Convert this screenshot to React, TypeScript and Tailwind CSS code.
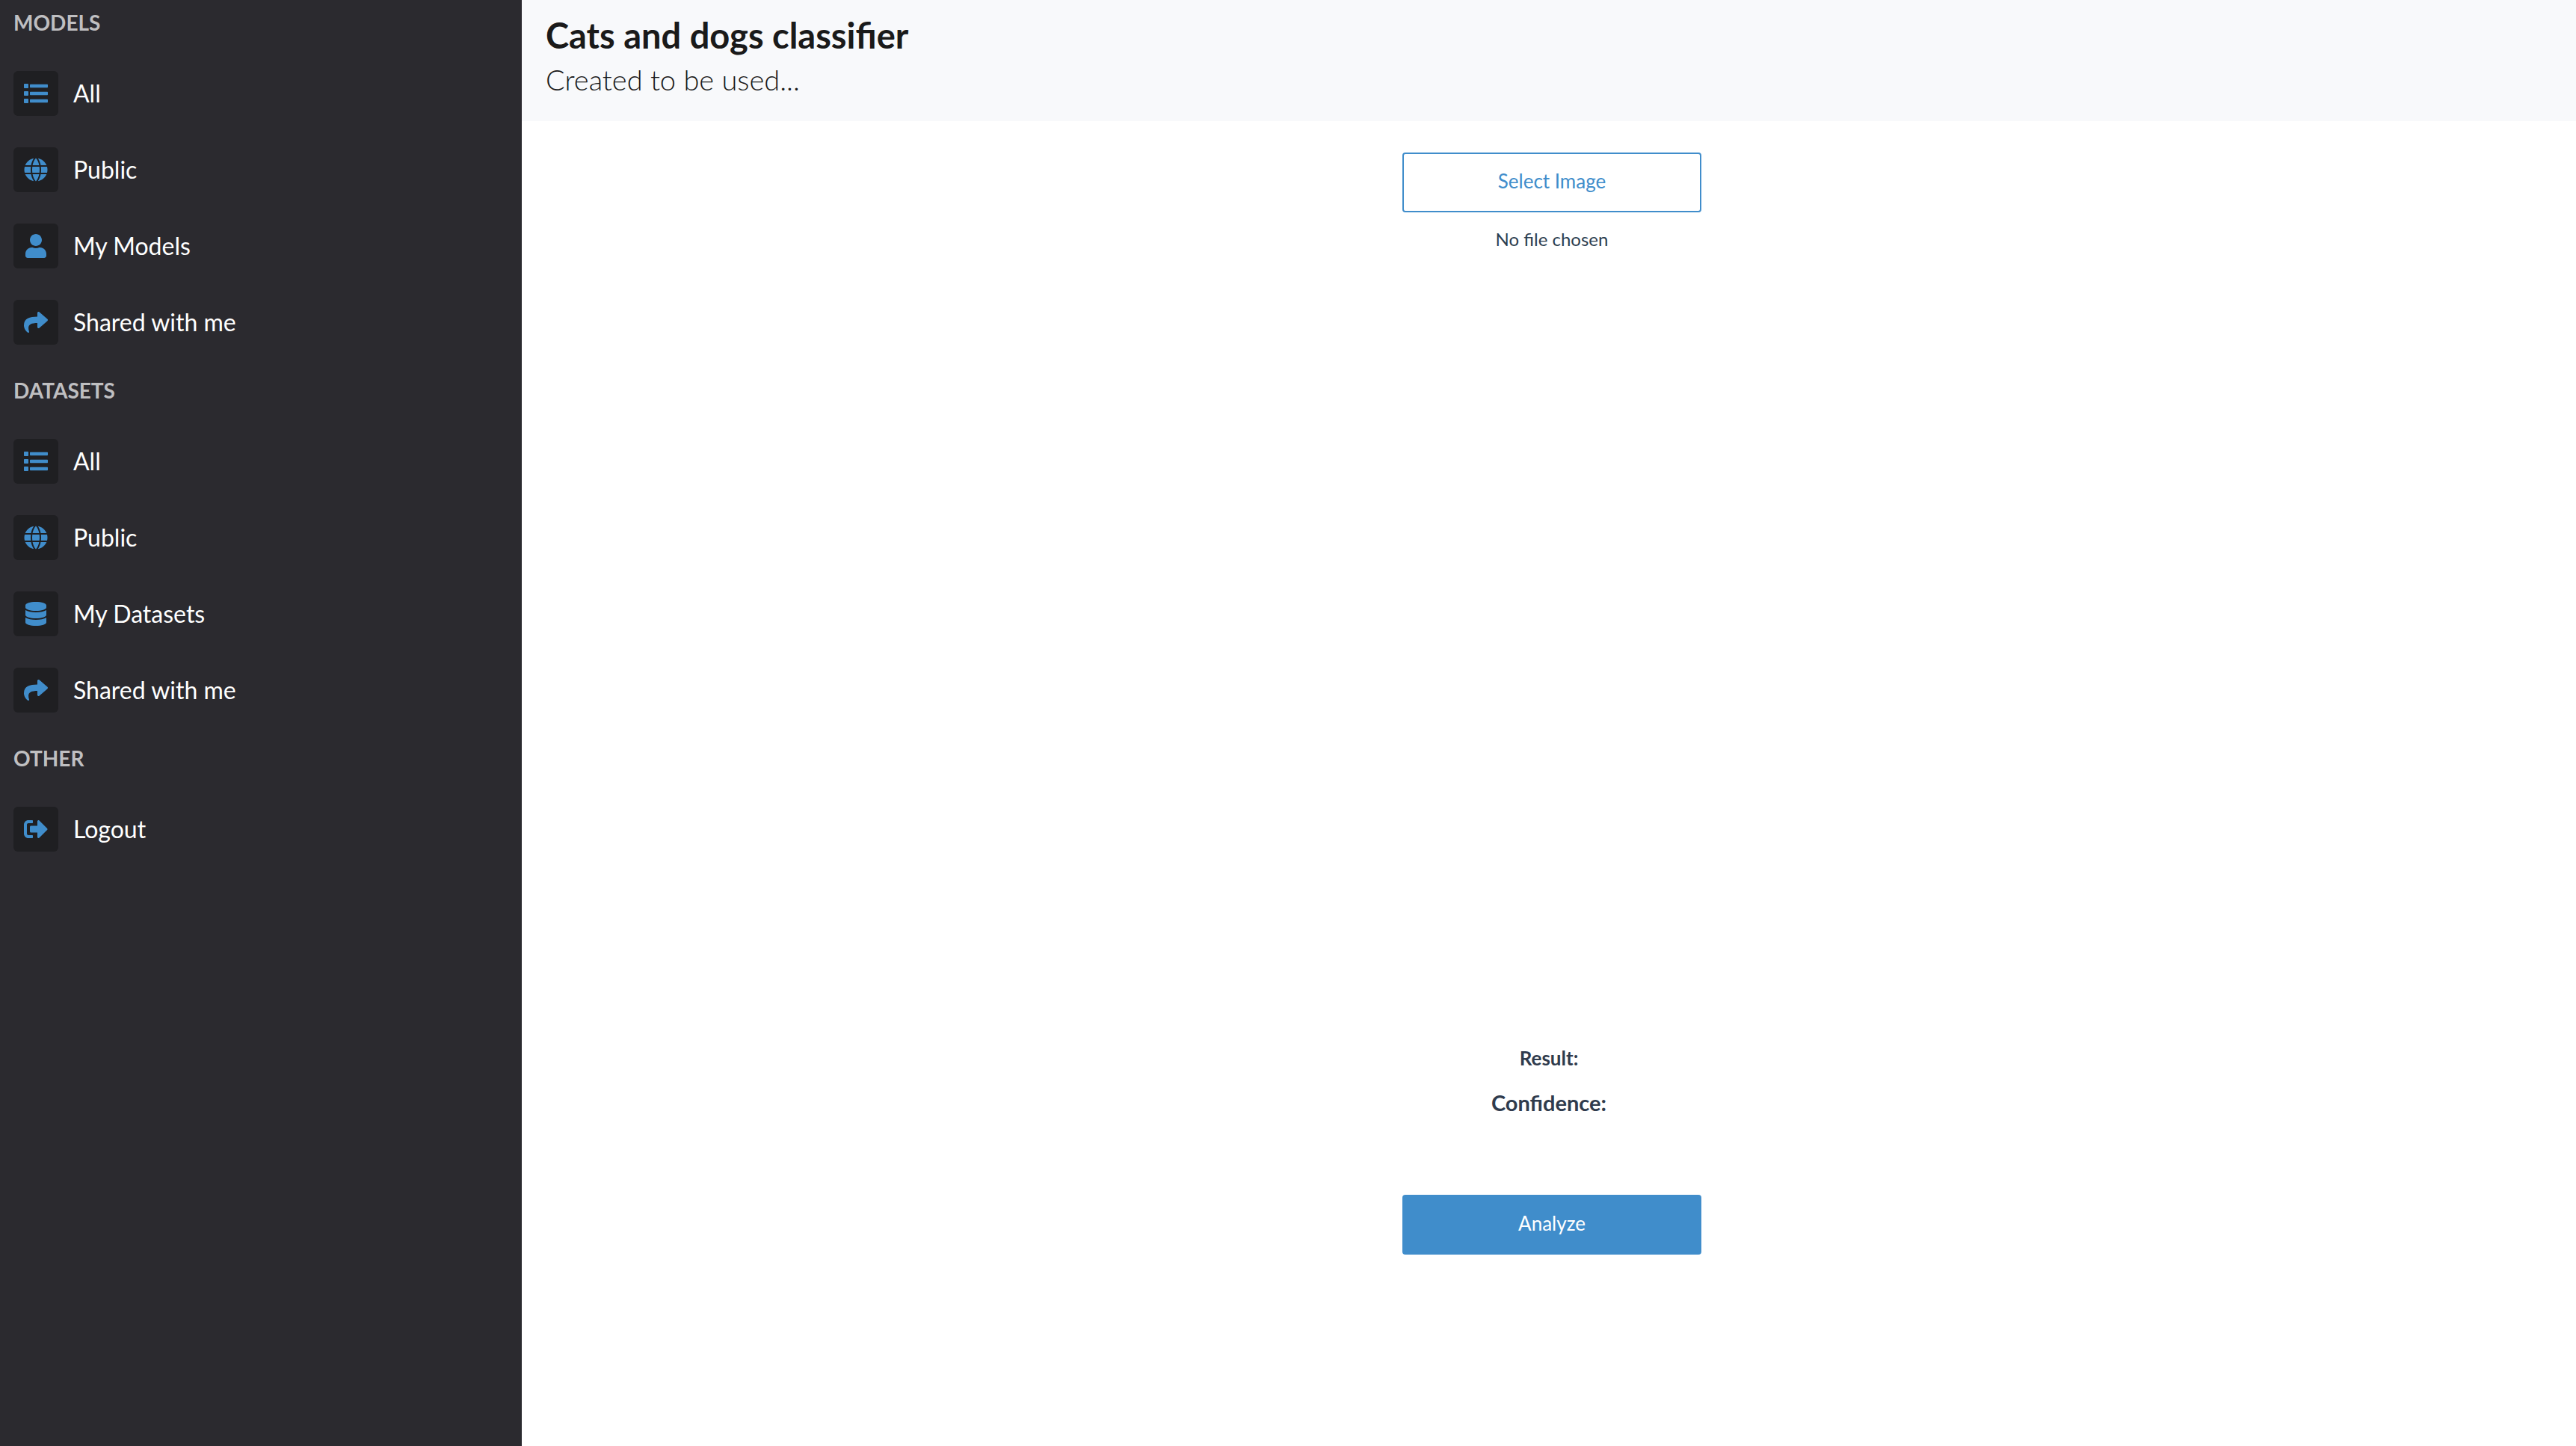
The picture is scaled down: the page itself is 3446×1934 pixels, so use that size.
import { useRef, useState, type ReactNode } from "react";
import { FaDatabase, FaShare, FaSignOutAlt, FaUser } from "react-icons/fa";

function ListIcon() {
  return (
    <svg viewBox="0 0 512 512" fill="currentColor" className="size-8" aria-hidden="true">
      <path d="M128 116V76c0-8.837 7.163-16 16-16h352c8.837 0 16 7.163 16 16v40c0 8.837-7.163 16-16 16H144c-8.837 0-16-7.163-16-16zm16 176h352c8.837 0 16-7.163 16-16v-40c0-8.837-7.163-16-16-16H144c-8.837 0-16 7.163-16 16v40c0 8.837 7.163 16 16 16zm0 160h352c8.837 0 16-7.163 16-16v-40c0-8.837-7.163-16-16-16H144c-8.837 0-16 7.163-16 16v40c0 8.837 7.163 16 16 16zM16 144h64c8.837 0 16-7.163 16-16V64c0-8.837-7.163-16-16-16H16C7.163 48 0 55.163 0 64v64c0 8.837 7.163 16 16 16zm0 160h64c8.837 0 16-7.163 16-16v-64c0-8.837-7.163-16-16-16H16c-8.837 0-16 7.163-16 16v64c0 8.837 7.163 16 16 16zm0 160h64c8.837 0 16-7.163 16-16v-64c0-8.837-7.163-16-16-16H16c-8.837 0-16 7.163-16 16v64c0 8.837 7.163 16 16 16z" />
    </svg>
  );
}

function GlobeIcon() {
  return (
    <svg viewBox="0 0 512 512" fill="currentColor" className="size-8" aria-hidden="true">
      <path d="M364.215 192h131.43c5.439 20.419 8.354 41.868 8.354 64s-2.915 43.581-8.354 64h-131.43c5.154-43.049 4.939-86.746 0-128zM185.214 352c10.678 53.68 33.173 112.514 70.125 151.992.221.001.44.008.661.008s.44-.008.661-.008c37.012-39.543 59.467-98.414 70.125-151.992H185.214zm174.13-192h125.385C452.802 84.024 384.128 27.305 300.95 12.075c30.238 43.12 48.821 96.332 58.394 147.925zm-27.35 32H180.006c-5.339 41.914-5.345 86.037 0 128h151.989c5.339-41.915 5.345-86.037-.001-128zM152.656 352H27.271c31.926 75.976 100.6 132.695 183.778 147.925-30.246-43.136-48.823-96.35-58.393-147.925zm206.688 0c-9.575 51.605-28.163 104.814-58.394 147.925 83.178-15.23 151.852-71.949 183.778-147.925H359.344zm-32.558-192c-10.678-53.68-33.174-112.514-70.125-151.992-.221 0-.44-.008-.661-.008s-.44.008-.661.008C218.218 47.551 195.762 106.422 185.105 160h141.681zM16.355 192C10.915 212.419 8 233.868 8 256s2.915 43.581 8.354 64h131.43c-4.939-41.254-5.154-84.951 0-128H16.355zm136.301-32c9.575-51.602 28.161-104.81 58.394-147.925C127.872 27.305 59.198 84.024 27.271 160h125.385z" />
    </svg>
  );
}

type Item = { label: string; icon: ReactNode };

const sections: { title: string; items: Item[] }[] = [
  {
    title: "MODELS",
    items: [
      { label: "All", icon: <ListIcon /> },
      { label: "Public", icon: <GlobeIcon /> },
      { label: "My Models", icon: <FaUser className="size-8" /> },
      { label: "Shared with me", icon: <FaShare className="size-8" /> },
    ],
  },
  {
    title: "DATASETS",
    items: [
      { label: "All", icon: <ListIcon /> },
      { label: "Public", icon: <GlobeIcon /> },
      { label: "My Datasets", icon: <FaDatabase className="size-8" /> },
      { label: "Shared with me", icon: <FaShare className="size-8" /> },
    ],
  },
  {
    title: "OTHER",
    items: [{ label: "Logout", icon: <FaSignOutAlt className="size-8" /> }],
  },
];

function Sidebar() {
  return (
    <nav className="flex w-[698px] shrink-0 flex-col gap-[10px] bg-[#2b2a2f] px-[18px]">
      {sections.map((section) => (
        <section key={section.title}>
          <h2 className="mb-[14px] text-[28px] leading-[60px] font-bold text-[#bfbfc1]">{section.title}</h2>
          <ul>
            {section.items.map((item) => (
              <li key={item.label}>
                <a href="#" className="flex h-[102px] items-center gap-5 text-[32px] text-white">
                  <span className="flex size-[60px] items-center justify-center rounded-md bg-[#1f1f22] text-[#408dcb]">
                    {item.icon}
                  </span>
                  {item.label}
                </a>
              </li>
            ))}
          </ul>
        </section>
      ))}
    </nav>
  );
}

export default function App() {
  const fileInput = useRef<HTMLInputElement>(null);
  const [fileName, setFileName] = useState("No file chosen");

  return (
    <div className="flex min-h-screen bg-white font-['Lato',sans-serif]">
      <Sidebar />
      <main className="flex-1">
        <header className="bg-[#f8f9fb] px-8 pt-4 pb-7 text-[#1a1a1a]">
          <h1 className="text-[47px] leading-[62px] font-bold">Cats and dogs classifier</h1>
          <p className="text-[38px] leading-[56px] font-light">Created to be used...</p>
        </header>
        <div className="flex flex-col items-center pt-[42px] pl-2 text-[#2c3e50]">
          <button
            type="button"
            onClick={() => fileInput.current?.click()}
            className="h-20 w-[400px] rounded border-2 border-[#408dcb] pb-1 text-[26px] text-[#408dcb]"
          >
            Select Image
          </button>
          <input
            ref={fileInput}
            type="file"
            accept="image/*"
            aria-label="Image file"
            className="hidden"
            onChange={(e) => setFileName(e.target.files?.[0]?.name ?? "No file chosen")}
          />
          <p className="mt-4 text-[24px] leading-[40px]">{fileName}</p>
          <div className="mt-[1055px] flex flex-col items-center gap-5 pr-2 font-bold text-[#2f3b4d]">
            <p className="text-[26px] leading-[40px]">Result:</p>
            <p className="text-[29px] leading-[40px]">Confidence:</p>
          </div>
          <button
            type="button"
            className="mt-[103px] h-20 w-[400px] rounded bg-[#408dcb] pb-1 text-[26px] text-white"
          >
            Analyze
          </button>
        </div>
      </main>
    </div>
  );
}
